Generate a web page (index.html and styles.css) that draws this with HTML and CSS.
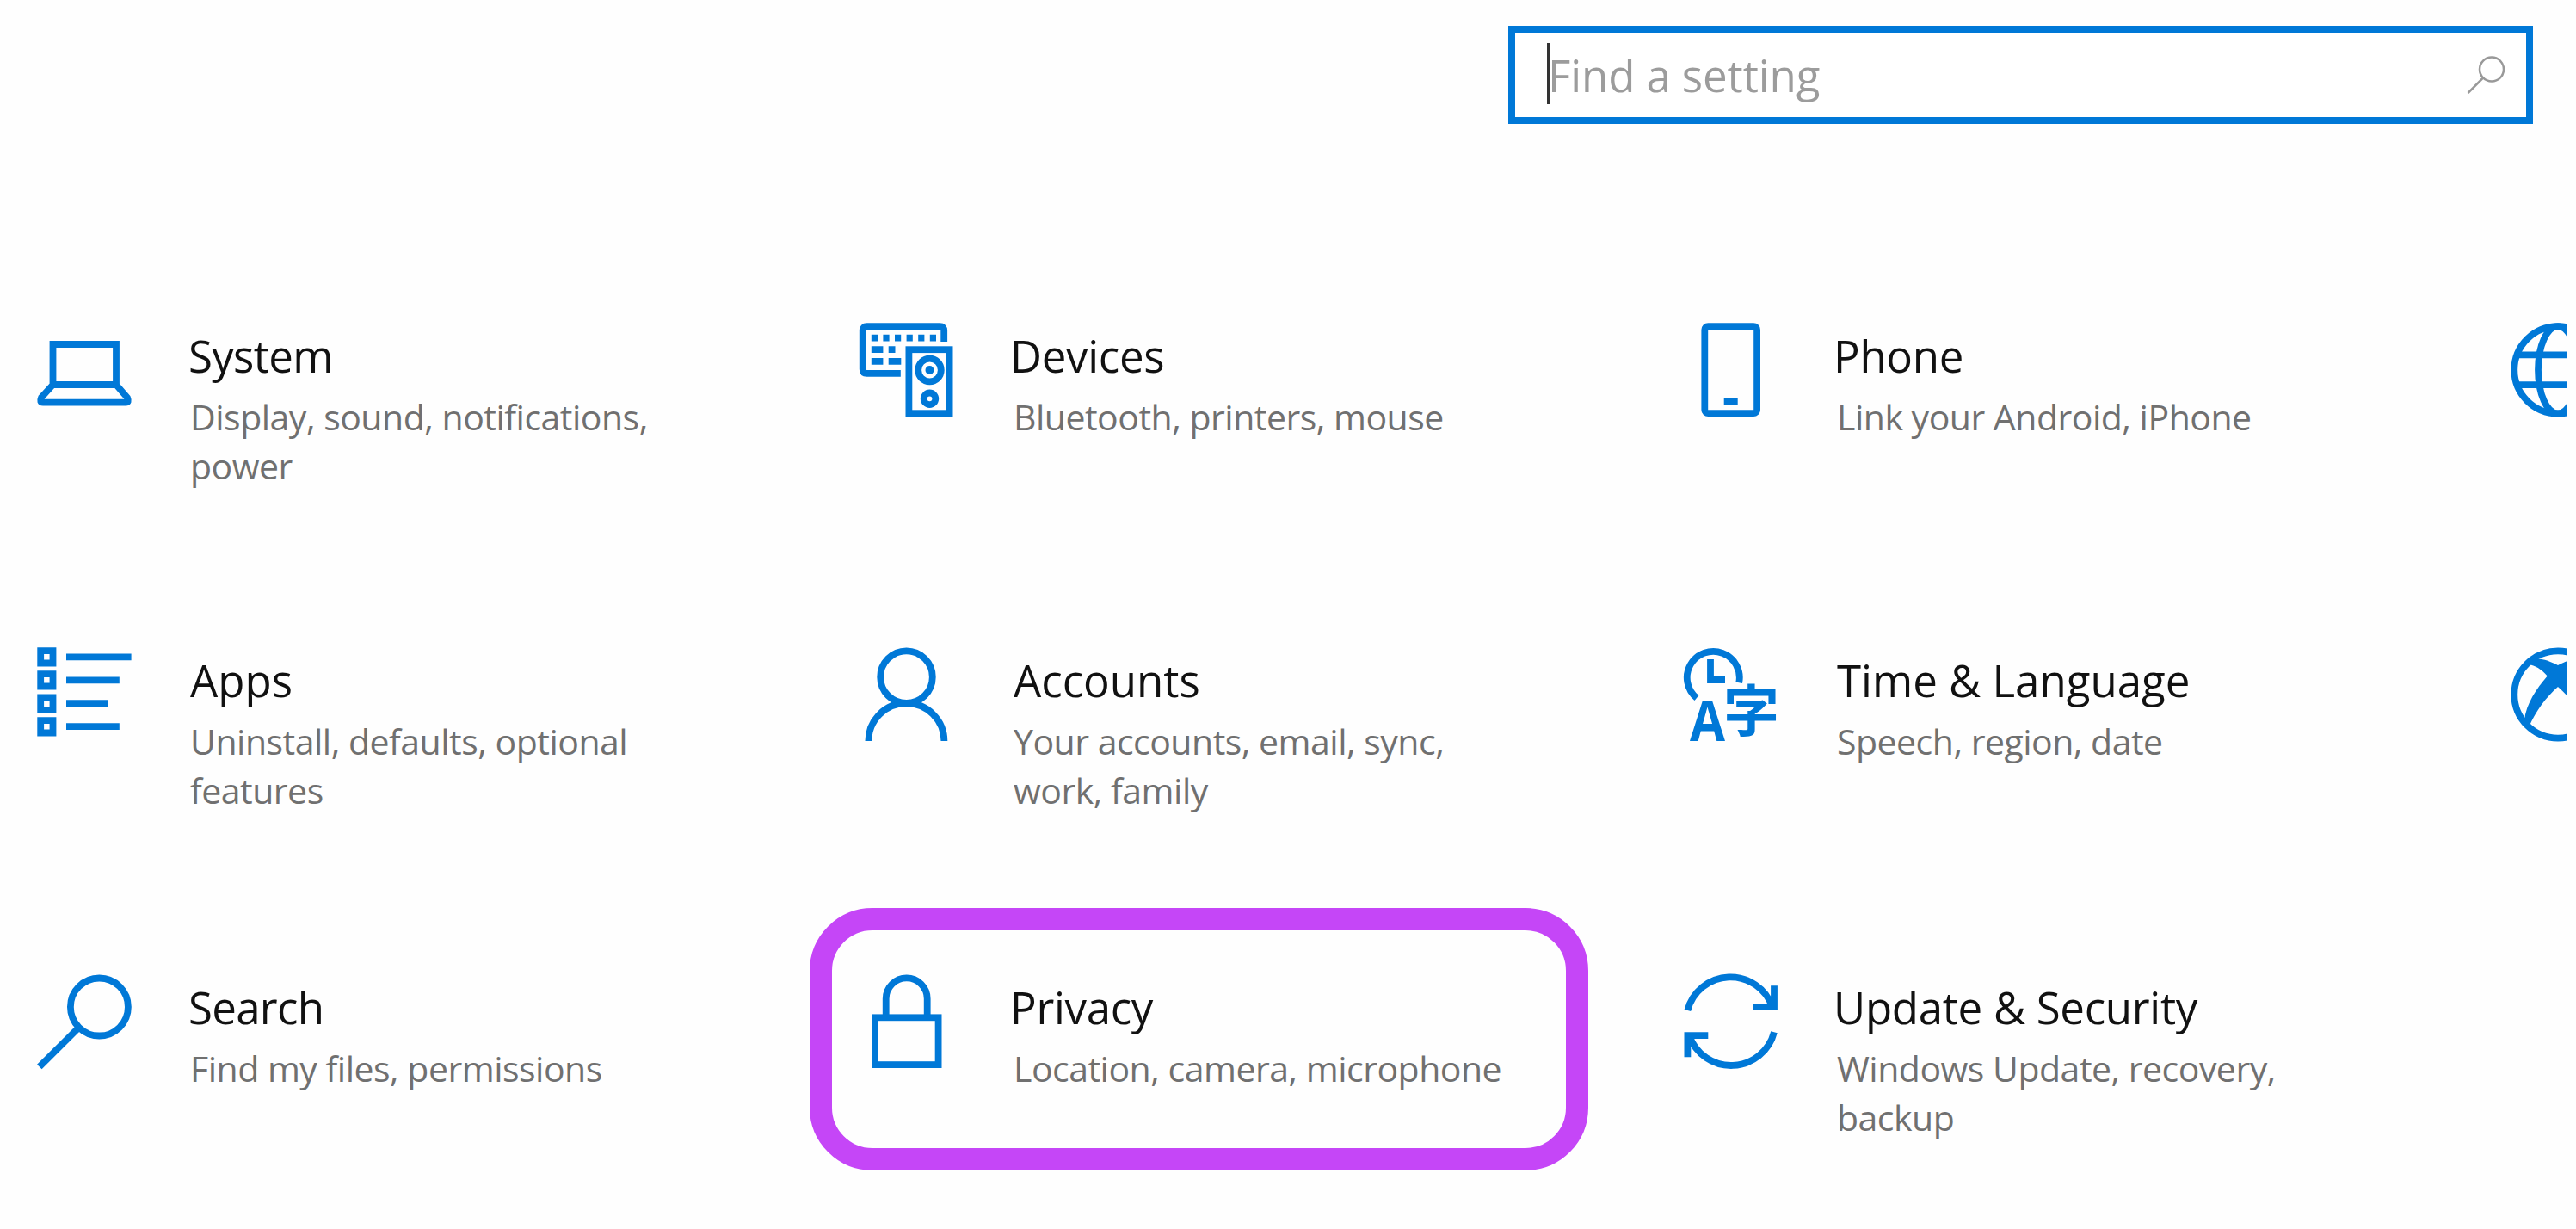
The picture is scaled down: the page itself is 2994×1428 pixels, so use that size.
FILE: index.html
```
<!DOCTYPE html>
<html lang="en">
<head>
    <meta charset="UTF-8">
    <meta name="viewport" content="width=device-width, initial-scale=1.0">
    <title>Settings</title>
    <link rel="stylesheet" href="styles.css">
</head>
<body>

    <div class="window">
        <header class="header">
            <div class="search-box">
                <span class="caret"></span>
                <span class="placeholder">Find a setting</span>
                <svg class="search-icon" viewBox="0 0 44 44">
                    <circle cx="29" cy="15.5" r="14"/>
                    <path d="M19 25.5L1.5 43"/>
                </svg>
            </div>
        </header>

        <main class="settings">
            <div class="tile narrow">
                <svg class="icon" viewBox="0 0 110 110">
                    <path d="M18.5 72V25H92V72ZM18.5 72L5 87Q2.5 92.7 7 92.7H103Q107.5 92.7 105 87L92 72"/>
                </svg>
                <div class="info">
                    <h2>System</h2>
                    <p>Display, sound, notifications, power</p>
                </div>
            </div>

            <div class="tile">
                <svg class="icon" viewBox="0 0 110 110">
                    <path d="M97.2 22V9Q97.2 4.2 92.5 4.2H7.5Q2.7 4.2 2.7 9V54Q2.7 58.8 7.5 58.8H46.8"/>
                    <path d="M12.8 17.7H88" stroke-dasharray="7.2 6.4"/>
                    <path d="M12.8 31.2H26.4M32.7 31.2H40.5M12.8 44.9H26.4M32.7 44.9H47.3"/>
                    <rect x="56.4" y="31.2" width="47.2" height="74"/>
                    <circle cx="80.5" cy="55" r="13.3"/>
                    <circle class="solid" cx="80.5" cy="55" r="5"/>
                    <circle cx="80.5" cy="88.3" r="6.8"/>
                </svg>
                <div class="info">
                    <h2>Devices</h2>
                    <p>Bluetooth, printers, mouse</p>
                </div>
            </div>

            <div class="tile">
                <svg class="icon" viewBox="0 0 110 110">
                    <rect x="24.3" y="4.2" width="60.8" height="101" rx="4"/>
                    <path d="M46.7 91.7H62.7"/>
                </svg>
                <div class="info">
                    <h2>Phone</h2>
                    <p>Link your Android, iPhone</p>
                </div>
            </div>

            <div class="tile">
                <svg class="icon" viewBox="0 0 110 110">
                    <circle cx="59" cy="54.8" r="50.7"/>
                    <ellipse cx="59" cy="54.8" rx="23" ry="50.7"/>
                    <path d="M12 37.4H106M12 72.2H106"/>
                </svg>
            </div>

            <div class="tile flush">
                <svg class="icon" viewBox="0 0 110 110">
                    <path d="M4.2 4.2H18.5V18.5H4.2ZM4.2 31.2H18.5V45.5H4.2ZM4.2 58.5H18.5V72.8H4.2ZM4.2 85.2H18.5V99.5H4.2Z"/>
                    <path d="M34 11.3H109.6M34 38.3H95.8M34 65.2H82M34 92.2H95.8"/>
                </svg>
                <div class="info">
                    <h2>Apps</h2>
                    <p>Uninstall, defaults, optional features</p>
                </div>
            </div>

            <div class="tile flush">
                <svg class="icon" viewBox="0 0 110 110">
                    <circle cx="53.5" cy="34.7" r="30.3"/>
                    <path d="M9.4 109A44 44 0 0 1 97.4 109"/>
                </svg>
                <div class="info">
                    <h2>Accounts</h2>
                    <p>Your accounts, email, sync, work, family</p>
                </div>
            </div>

            <div class="tile flush">
                <svg class="icon" viewBox="0 0 110 110">
                    <path d="M15 59A30.5 30.5 0 1 1 64.2 41.3"/>
                    <path d="M31 14V38H48"/>
                    <text class="latin" x="7" y="109" textLength="41" lengthAdjust="spacingAndGlyphs">A</text>
                    <text class="kanji" x="46" y="98">字</text>
                </svg>
                <div class="info">
                    <h2>Time &amp; Language</h2>
                    <p>Speech, region, date</p>
                </div>
            </div>

            <div class="tile">
                <svg class="icon" viewBox="0 0 110 110">
                    <circle cx="59" cy="55" r="50.7"/>
                    <path class="solid" d="M24 20C30 11 42 12 59 21C76 12 88 11 94 20C85 21 78 26 71.3 33.4C84 48 96 66 98 84.4L92 91C85 75 73 58 59 45.9C45 58 33 75 26 91L20 84.4C22 66 34 48 46.7 33.4C40 26 33 21 24 20Z"/>
                </svg>
            </div>

            <div class="tile narrow">
                <svg class="icon" viewBox="0 0 110 110">
                    <circle cx="72.4" cy="38" r="33.5"/>
                    <path d="M48.8 61.7L2.8 107.5"/>
                </svg>
                <div class="info">
                    <h2>Search</h2>
                    <p>Find my files, permissions</p>
                </div>
            </div>

            <div class="tile highlighted">
                <svg class="icon" viewBox="0 0 110 110">
                    <rect x="17" y="50.3" width="73.6" height="54.8"/>
                    <path d="M29.7 50V28.4A24 24 0 0 1 77.7 28.4V50"/>
                </svg>
                <div class="info">
                    <h2>Privacy</h2>
                    <p>Location, camera, microphone</p>
                </div>
            </div>

            <div class="tile">
                <svg class="icon" viewBox="0 0 110 110">
                    <path d="M4.4 42A51.5 51.5 0 0 1 103 38.2M105 13.3V38.2H81"/>
                    <path d="M105 67.3A51.5 51.5 0 0 1 6.4 71.2M4.4 96.3V71.2H28.3"/>
                </svg>
                <div class="info">
                    <h2>Update &amp; Security</h2>
                    <p>Windows Update, recovery, backup</p>
                </div>
            </div>
        </main>
    </div>

</body>
</html>
```
FILE: styles.css
```
body {
    margin: 0;
    background-color: #fefefe;
    font-family: "Open Sans", "Noto Sans", sans-serif;
}
.window {
    width: 2984px;
    height: 1428px;
    overflow: hidden;
}
.header {
    display: flex;
    justify-content: flex-end;
    align-items: flex-start;
    box-sizing: border-box;
    height: 375px;
    padding: 30px 40px 0 0;
}
.search-box {
    display: flex;
    align-items: center;
    box-sizing: border-box;
    width: 1191px;
    height: 114px;
    padding: 0 25px 0 37px;
    border: 8.5px solid #0078d7;
    background-color: #fff;
}
.caret {
    width: 4px;
    height: 71px;
    margin-bottom: 3px;
    background-color: #333;
}
.placeholder {
    flex: 1;
    margin: 0 0 1px -3px;
    font-size: 51px;
    line-height: 60px;
    letter-spacing: -0.1px;
    color: #9c9c9c;
}
.search-icon {
    width: 44px;
    height: 44px;
    fill: none;
    stroke: #999;
    stroke-width: 2.5;
}
.settings {
    display: grid;
    grid-template-columns: repeat(4, 957px);
    grid-template-rows: 377px 380px 296px;
    padding-left: 43px;
}
.tile {
    position: relative;
    display: flex;
    align-items: flex-start;
    gap: 68px;
}
.icon {
    flex: none;
    width: 110px;
    height: 110px;
    overflow: visible;
    fill: none;
    stroke: #0078d7;
    stroke-width: 7.8;
}
.icon .solid,
.icon .latin,
.icon .kanji {
    fill: #0078d7;
    stroke: none;
}
.icon .latin {
    font-size: 67px;
    font-weight: 700;
}
.icon .kanji {
    font-family: "Noto Sans CJK JP", sans-serif;
    font-size: 65px;
    font-weight: 700;
}
.info {
    width: 578px;
    padding-top: 8px;
}
.info h2 {
    margin: 0 0 13px -4px;
    font-size: 51px;
    font-weight: 400;
    line-height: 60px;
    letter-spacing: -0.3px;
    color: #111;
}
.flush .info h2 {
    margin-left: 0;
    letter-spacing: 0;
}
.narrow .info h2 {
    margin-left: -2px;
    letter-spacing: -0.7px;
}
.info p {
    margin: 0;
    font-size: 41px;
    line-height: 57px;
    letter-spacing: -0.5px;
    color: #707070;
}
/* ring around the tile the user should pick */
.highlighted::before {
    content: "";
    position: absolute;
    top: -77px;
    left: -59px;
    box-sizing: border-box;
    width: 905px;
    height: 305px;
    border: 26px solid #c546f7;
    border-radius: 73px;
}
```
